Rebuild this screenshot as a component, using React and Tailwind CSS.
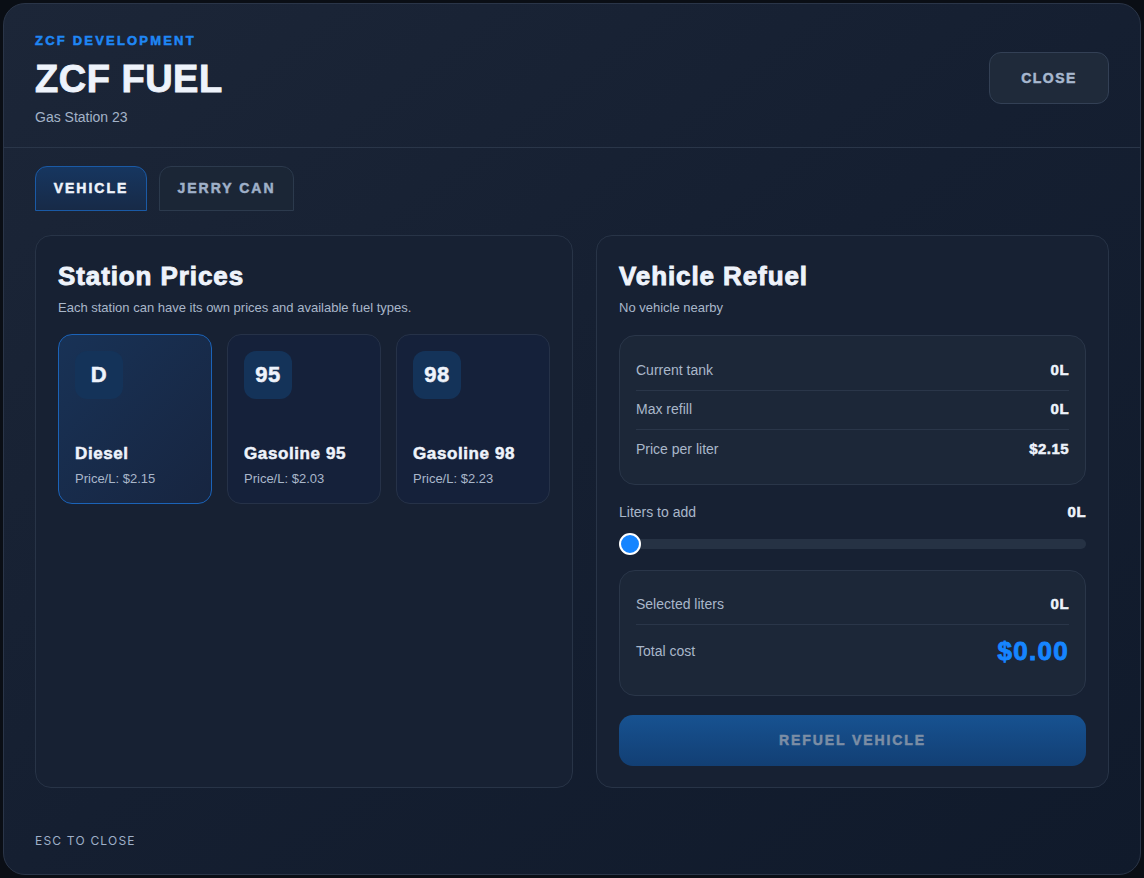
import React, { useState } from 'react';

const fuels = [
  { code: 'D', name: 'Diesel', price: '2.15' },
  { code: '95', name: 'Gasoline 95', price: '2.03' },
  { code: '98', name: 'Gasoline 98', price: '2.23' },
];

// heavy display text, a bit thicker than plain bold
const heavy = "font-['Liberation_Sans',Arial,sans-serif] font-bold [-webkit-text-stroke:0.5px_currentColor]";
const heavyBig = "font-['Liberation_Sans',Arial,sans-serif] font-bold [-webkit-text-stroke:0.9px_currentColor]";

const InfoRow = ({ label, value, last }) => (
  <div className={`flex items-center justify-between h-[39px] ${last ? '' : 'border-b border-[#2a3649]'}`}>
    <span className="text-[14px] text-[#a9b7ca]">{label}</span>
    <span className={`${heavy} text-[15px] tracking-[0.03em] text-[#eef3fb]`}>{value}</span>
  </div>
);

export default function App() {
  const [selected, setSelected] = useState(0);
  const [tab, setTab] = useState('vehicle');
  const fuel = fuels[selected];

  const tabClass = (active) =>
    `${heavy} h-[45px] rounded-t-[12px] border text-[14px] tracking-[2px] ${
      active
        ? 'border-[#1a5aa6] bg-gradient-to-b from-[#163660] to-[#172a47] text-[#eef3fb]'
        : 'border-[#2c3a4d] bg-[#1b2636] text-[#9fb0c8]'
    }`;

  return (
    <div className="w-[1144px] h-[878px] bg-[#0a0e15] p-[3px] font-['Liberation_Sans',Arial,sans-serif]">
      <div className="h-full rounded-[22px] border border-[#2a3548] bg-gradient-to-br from-[#1c2638] via-[#151f31] to-[#101a2b] flex flex-col overflow-hidden">
        {/* header */}
        <div className="flex items-start justify-between px-[31px] pt-[30px] pb-[19px] border-b border-[#2a3649]">
          <div>
            <div className={`${heavy} text-[13px] tracking-[2.2px] text-[#1f87f5] leading-none`}>ZCF DEVELOPMENT</div>
            <h1 className={`${heavyBig} text-[38px] tracking-[0.5px] text-[#eef3fb] leading-none mt-[13px]`}>ZCF FUEL</h1>
            <div className="text-[14px] text-[#a3b3c8] mt-[9px]">Gas Station 23</div>
          </div>
          <button className={`${heavy} mt-[18px] w-[120px] h-[52px] rounded-[12px] border border-[#334055] bg-[#1f2a3a] text-[14px] tracking-[1.5px] text-[#a7b8cf]`}>
            CLOSE
          </button>
        </div>

        {/* tabs */}
        <div className="flex gap-[12px] px-[31px] pt-[18px]">
          <button onClick={() => setTab('vehicle')} className={`${tabClass(tab === 'vehicle')} w-[112px]`}>
            VEHICLE
          </button>
          <button onClick={() => setTab('jerry')} className={`${tabClass(tab === 'jerry')} w-[135px]`}>
            JERRY CAN
          </button>
        </div>

        {/* panels */}
        <div className="grid grid-cols-[538px_1fr] gap-[23px] px-[31px] pt-[24px]">
          <section className="h-[553px] rounded-[16px] border border-[#283447] bg-[#172133] px-[22px] pt-[27px]">
            <h2 className={`${heavyBig} text-[26px] tracking-[0.9px] text-[#eef3fb] leading-none`}>Station Prices</h2>
            <p className="text-[13px] text-[#a9b7ca] mt-[9px]">Each station can have its own prices and available fuel types.</p>
            <div className="grid grid-cols-3 gap-[15px] mt-[16px]">
              {fuels.map((f, i) => (
                <button
                  key={f.code}
                  onClick={() => setSelected(i)}
                  className={`h-[170px] rounded-[14px] border text-left px-[16px] pt-[16px] flex flex-col ${
                    i === selected
                      ? 'border-[#1b63b8] bg-gradient-to-br from-[#183256] to-[#172540]'
                      : 'border-[#263248] bg-[#15213a]'
                  }`}
                >
                  <div className={`${heavy} w-[48px] h-[48px] rounded-[12px] bg-[#143359] flex items-center justify-center text-[22px] tracking-[0.5px] text-[#eef3fb]`}>
                    {f.code}
                  </div>
                  <div className={`${heavy} text-[17px] tracking-[0.6px] text-[#eef3fb] mt-[42px]`}>{f.name}</div>
                  <div className="text-[13px] text-[#a9b7ca] mt-[3px]">Price/L: ${f.price}</div>
                </button>
              ))}
            </div>
          </section>

          <section className="h-[553px] rounded-[16px] border border-[#283447] bg-[#172133] px-[22px] pt-[27px]">
            <h2 className={`${heavyBig} text-[26px] tracking-[0.9px] text-[#eef3fb] leading-none`}>Vehicle Refuel</h2>
            <p className="text-[13px] text-[#a9b7ca] mt-[9px]">No vehicle nearby</p>

            <div className="mt-[17px] rounded-[16px] border border-[#2a3649] bg-[#1c2738] px-[16px] pt-[16px] pb-[15px]">
              <InfoRow label="Current tank" value="0L" />
              <InfoRow label="Max refill" value="0L" />
              <InfoRow label="Price per liter" value={`$${fuel.price}`} last />
            </div>

            <div className="flex items-center justify-between h-[20px] mt-[18px]">
              <span className="text-[14px] text-[#a9b7ca]">Liters to add</span>
              <span className={`${heavy} text-[15px] tracking-[0.03em] text-[#eef3fb]`}>0L</span>
            </div>
            <div className="relative mt-[16px] h-[10px] rounded-full bg-[#263244]">
              <div className="absolute left-0 top-[-6px] w-[22px] h-[22px] rounded-full bg-[#1685ff] border-2 border-white" />
            </div>

            <div className="mt-[21px] rounded-[16px] border border-[#2a3649] bg-[#1c2738] px-[16px] pt-[15px] pb-[16px]">
              <div className="flex items-center justify-between h-[39px] border-b border-[#2a3649]">
                <span className="text-[14px] text-[#a9b7ca]">Selected liters</span>
                <span className={`${heavy} text-[15px] tracking-[0.03em] text-[#eef3fb]`}>0L</span>
              </div>
              <div className="flex items-center justify-between h-[54px]">
                <span className="text-[14px] text-[#a9b7ca]">Total cost</span>
                <span className={`${heavyBig} text-[26px] tracking-[1.3px] text-[#1685ff]`}>$0.00</span>
              </div>
            </div>

            <button className={`${heavy} mt-[19px] w-full h-[51px] rounded-[14px] bg-gradient-to-b from-[#175291] to-[#123f74] text-[14px] tracking-[1.9px] text-[#7c8ea5]`}>
              REFUEL VEHICLE
            </button>
          </section>
        </div>

        {/* footer */}
        <div className="px-[31px] mt-auto pb-[26px] leading-none">
          <span className="font-['Inter',sans-serif] text-[12px] tracking-[0.1em] text-[#9fb0c8]">ESC TO CLOSE</span>
        </div>
      </div>
    </div>
  );
}
